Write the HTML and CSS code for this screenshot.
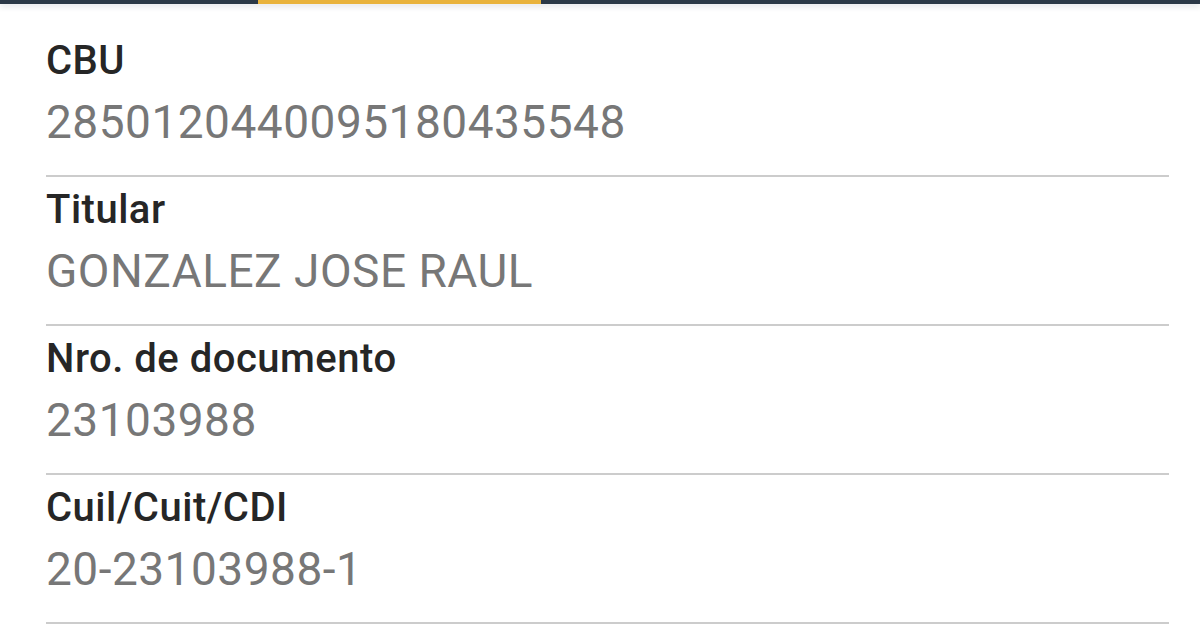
FILE: index.html
```html
<!DOCTYPE html>
<html lang="es">
<head>
    <meta charset="UTF-8">
    <meta name="viewport" content="width=device-width, initial-scale=1.0">
    <title>Datos de la cuenta</title>
    <link rel="stylesheet" href="styles.css">
</head>
<body>
    <div class="tabs">
        <div class="tab"></div>
        <div class="tab active"></div>
        <div class="tab rest"></div>
    </div>

    <div class="details">
        <div class="row">
            <div class="label">CBU</div>
            <div class="value">2850120440095180435548</div>
        </div>
        <div class="row">
            <div class="label">Titular</div>
            <div class="value">GONZALEZ JOSE RAUL</div>
        </div>
        <div class="row">
            <div class="label">Nro. de documento</div>
            <div class="value">23103988</div>
        </div>
        <div class="row">
            <div class="label">Cuil/Cuit/CDI</div>
            <div class="value">20-23103988-1</div>
        </div>
    </div>
</body>
</html>
```

FILE: styles.css
```css
body {
    margin: 0;
    background: #ffffff;
    font-family: Roboto, "Noto Sans", Arial, sans-serif;
}
.tabs {
    display: flex;
    height: 4px;
    background: #2b3947;
    box-shadow: 0 2px 6px rgba(40, 60, 80, 0.18);
}
.tab {
    width: 258px;
}
.tab.active {
    width: 283px;
    background: #e9b33c;
}
.tab.rest {
    flex: 1;
}
.details {
    margin: 24px 31px 0 46px;
}
.row {
    padding: 9px 0 26px;
    border-bottom: 2px solid #cccccc;
}
.label {
    font-size: 40px;
    font-weight: 500;
    line-height: 47px;
    letter-spacing: 0.5px;
    color: #262626;
}
.value {
    margin-top: 11px;
    font-size: 46px;
    line-height: 54px;
    letter-spacing: 0.5px;
    color: #777777;
}
```
